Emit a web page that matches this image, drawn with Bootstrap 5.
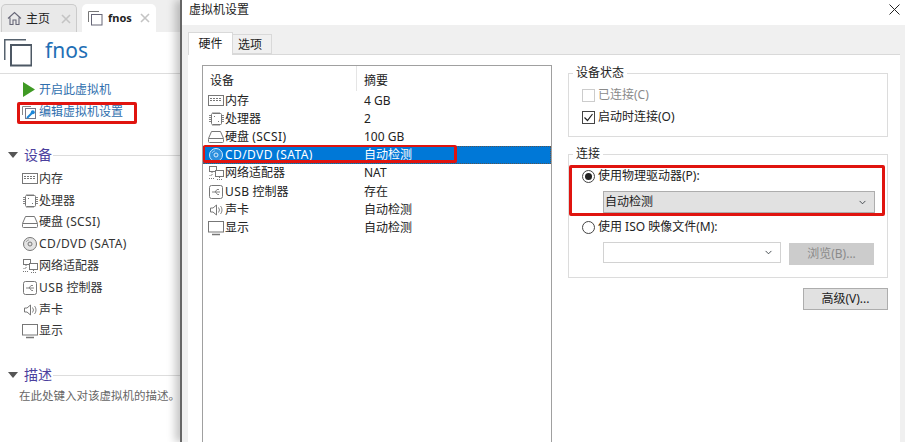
<!DOCTYPE html>
<html lang="zh-CN">
<head>
<meta charset="utf-8">
<title>虚拟机设置</title>
<link rel="stylesheet" href="https://cdn.jsdelivr.net/npm/bootstrap@5.3.0/dist/css/bootstrap.min.css">
<style>
html,body{height:442px;overflow:hidden}
body{position:relative;font:12px/16px "Noto Sans","Noto Sans CJK SC",sans-serif;color:#222;background:#fff}
.vm-page{height:442px}
.vm-side{width:180px;flex:none;overflow:hidden}
.vm-tabbar{height:32px;padding:4px 0 0 1px;background:#efefef;gap:5px}
.vm-tab{height:28px;border-radius:5px 5px 0 0;padding-left:5px;align-items:center}
.vm-tab-home{width:76px;background:#e9e9e9;border:1px solid #cbcbcb;border-bottom:0}
.vm-tab-cur{width:74px;background:#fff;font-weight:700;font-size:11px;padding-left:6px}
.vm-tab svg{flex:none}
.vm-tab span{margin-left:4px}
.vm-tab-cur span{margin-left:5px}
.vm-x{margin-left:auto;margin-right:5px}
.vm-tab-cur .vm-x{margin-right:6px}
.vm-head{height:42px;border-bottom:1px solid #ddd;padding-left:4px;align-items:center}
.vm-name{font-size:21px;line-height:28px;color:#1f6fb5;margin:-6px 0 0 13px}
.vm-actions{padding:5px 0 0 22px}
.vm-act{height:22px;align-items:center;color:#2f6fae}
.vm-act svg{flex:none;width:16px;height:16px;margin-right:1px}
.vm-sec{height:20px;align-items:center;padding-left:8px;color:#4b3f9e;font-size:14px}
.vm-sec::after{content:"";flex:1;border-top:1px solid #ddd;margin-left:1px}
.vm-arrow{width:0;height:0;border:5px solid transparent;border-top:6px solid #555;border-bottom:0;margin-right:6px}
.vm-sec-dev{margin-top:22px}
.vm-devs{padding:3px 0 0 21px}
.vm-dev{height:21.8px;align-items:center;color:#333}
.vm-dev svg{flex:none;width:18px;height:16px;color:#777}
.vm-sec-desc{margin-top:23px}
.vm-desc{margin:2px 0 0 19px;height:18px;line-height:18px;font-size:11.5px;color:#666;white-space:nowrap}
.vm-wide{letter-spacing:.4px}
.vm-dialog{flex:1;min-width:0;border-left:2px solid #666;background:#f0f0f0;box-shadow:-5px 0 8px rgba(0,0,0,.22)}
.vm-title{height:25px;background:#fff;padding:0 5px 6px 7px;align-items:center;justify-content:space-between}
.vm-tabs{height:29px;padding:7px 0 0 6px;align-items:flex-end}
.vm-dtab{border:1px solid #d9d9d9;background:#f0f0f0;height:20px;width:39px;line-height:20px;text-align:center;border-left:0;padding-right:4px}
.vm-dtab-on{height:23px;width:45px;background:#fff;border:1px solid #d9d9d9;border-bottom:0;line-height:22px;margin-bottom:-1px;position:relative;text-align:center}
.vm-panel{height:388px;margin:0 5px 0 6px;background:#fff;border-top:1px solid #d9d9d9;padding:10px 0 0 14px;gap:16px;overflow:hidden}
.vm-list{width:350px;height:377px;flex:none;border:1px solid #a0a0a0;border-bottom:0}
.vm-lhead{height:25.6px;padding-left:5px;align-items:center}
.vm-lhead span:first-child{width:149px;border-right:1px solid #e5e5e5;height:25px;line-height:29px;padding-left:2px;flex:none}
.vm-lhead span:last-child{padding:4px 0 0 7px}
.vm-row{height:18.2px;align-items:center;padding-left:4px}
.vm-row svg{flex:none;width:18px;height:16px;color:#777}
.vm-c1{width:139px;flex:none}
.vm-row-on{background:#0078d7;color:#fff;outline:1px dotted #555;outline-offset:-1px}
.vm-row-on svg{color:#d5e9fb}
.vm-right{width:320px;flex:none}
.vm-fs{border:1px solid #dcdcdc;padding:0 13px;margin:0}
.vm-fs legend{float:none;width:auto;font-size:12px;line-height:16px;padding:0 3px;margin:0 0 0 -9px}
.vm-fs-a{height:72px}
.vm-fs-b{height:132px;margin-top:9px}
.vm-opt{height:22px;align-items:center;margin-top:3px}
.vm-opt + .vm-opt{margin-top:0}
.vm-opt svg{flex:none;margin-right:3px}
.vm-dim{color:#8a8a8a}
.vm-ind{padding-left:21px;margin-top:4px}
.vm-sel.form-select{font-size:12px;line-height:16px;border-radius:0;padding:0 0 0 1px;color:#222;border:1px solid #adadad;background-color:#e1e1e1;background-size:11px 7px;background-position:right 6px center;height:22px;width:272px;box-shadow:none}
.vm-sel-off.form-select{width:178px;height:21px;background-color:#fff;border-color:#d2d2d2}
.vm-btn.btn{font-size:12px;line-height:16px;border-radius:0;padding:0;width:85px;height:22px;color:#222;background:#e1e1e1;border:1px solid #adadad}
.vm-btn-off.btn{margin:1px 0 0 8px;opacity:1;color:#8a8a8a;background:#ccc;border-color:#ccc}
.vm-adv{justify-content:flex-end;margin-top:10px}
.vm-red{position:absolute;border:3px solid #e0140f;border-radius:2px;pointer-events:none}
.vm-red-1{left:17px;top:102px;width:120px;height:22px}
.vm-red-2{left:203px;top:145px;width:254px;height:18px;border-width:2px 3px 3px 2px}
.vm-red-3{left:569px;top:165px;width:316px;height:51px}
</style>
</head>
<body>
<svg class="d-none" aria-hidden="true">
<symbol id="i-mem" viewBox="0 0 18 16"><g fill="none" stroke="currentColor"><rect x="1.500" y="2.500" width="15" height="10"/><path d="M3 5.500h12M3 7.500h12" stroke-dasharray="2 1"/></g></symbol>
<symbol id="i-cpu" viewBox="0 0 18 16"><g fill="none" stroke="currentColor"><rect x="4.500" y="2.500" width="10" height="11" rx="1"/><path d="M2 4.500h2M2 6.500h2M2 8.500h2M2 10.500h2M15 4.500h2M15 6.500h2M15 8.500h2M15 10.500h2M6 1v1M8 1v1M10 1v1M12 1v1M6 14v1M8 14v1M10 14v1M12 14v1" stroke-width=".9"/></g><path d="M7 5h1v1H7zM11 10h1v1h-1z" fill="currentColor"/></symbol>
<symbol id="i-hdd" viewBox="0 0 18 16"><g fill="none" stroke="currentColor"><path d="M4.500 2.500h9l3 7h-15z"/><rect x="1.500" y="9.500" width="15" height="4" rx="1"/></g></symbol>
<symbol id="i-cd" viewBox="0 0 18 16"><circle cx="9" cy="8" r="6.500" fill="currentColor" opacity=".2"/><g fill="none" stroke="currentColor"><circle cx="9" cy="8" r="6.500"/><circle cx="9" cy="8" r="2"/><path d="M5 6a4.500 4.500 0 0 1 3-2.200" opacity=".6"/></g></symbol>
<symbol id="i-net" viewBox="0 0 18 16"><g fill="none" stroke="currentColor"><rect x="2.500" y="1.500" width="7" height="5"/><rect x="8.500" y="5.500" width="8" height="6" fill="#fff"/><path d="M12.500 12v2M10 14.500h5M5 7v3.500H2M2 13.500h5" stroke-dasharray="1 1"/></g></symbol>
<symbol id="i-usb" viewBox="0 0 18 16"><g fill="none" stroke="currentColor"><rect x="2.500" y="1.500" width="13" height="13" rx="2"/><path d="M5 8h8M8 8l2-2.500h2M8.500 8l2 2.500h1.500" stroke-width=".9"/></g></symbol>
<symbol id="i-snd" viewBox="0 0 18 16"><g fill="none" stroke="currentColor"><path d="M3.500 6v4h2.500l3.500 3V3L6 6z"/><path d="M11.500 5.500a4 4 0 0 1 0 5M13.500 4a6 6 0 0 1 0 8" stroke-width=".9"/></g></symbol>
<symbol id="i-dsp" viewBox="0 0 18 16"><g fill="none" stroke="currentColor"><rect x="1.500" y="1.500" width="15" height="10.500"/><path d="M5 14.500h8" stroke-width="1.500"/></g></symbol>
<symbol id="i-xx" viewBox="0 0 10 10"><path d="M1 1l8 8M9 1l-8 8" fill="none" stroke="currentColor" stroke-width="1.600"/></symbol>
</svg>

<div class="vm-page d-flex">
  <aside class="vm-side">
    <div class="vm-tabbar d-flex">
      <div class="vm-tab vm-tab-home d-flex">
        <svg width="15" height="15" viewBox="0 0 15 15"><path d="M1 7.500L7.500 1.500 14 7.500M3 6.500V13.500h3V9h3v4.500h3V6.500" fill="none" stroke="#667" stroke-width="1.100"/></svg>
        <span>主页</span>
        <svg class="vm-x" width="10" height="10" color="#c4c4c4"><use href="#i-xx"/></svg>
      </div>
      <div class="vm-tab vm-tab-cur d-flex">
        <svg width="15" height="15" viewBox="0 0 15 15"><path d="M.5 11V.5H11" fill="none" stroke="#777"/><rect x="3.500" y="3.500" width="10.500" height="10.500" fill="none" stroke="#667"/></svg>
        <span>fnos</span>
        <svg class="vm-x" width="10" height="10" color="#c4c4c4"><use href="#i-xx"/></svg>
      </div>
    </div>
    <div class="vm-head d-flex">
      <svg width="28" height="28" viewBox="0 0 28 28"><path d="M.75 21V.75H22" fill="none" stroke="#56626e" stroke-width="1.500"/><rect x="7" y="6" width="20.500" height="20.500" fill="none" stroke="#4d5864" stroke-width="2"/></svg>
      <div class="vm-name">fnos</div>
    </div>
    <div class="vm-actions">
      <div class="vm-act d-flex"><svg viewBox="0 0 16 16"><path d="M1 0l12 7.500L1 15z" fill="#3f9a24"/></svg><span>开启此虚拟机</span></div>
      <div class="vm-act d-flex"><svg viewBox="0 0 16 16"><path d="M.5 11V2.500H9" fill="none" stroke="#888"/><rect x="3.500" y="4.500" width="10" height="10" fill="#fff" stroke="#778"/><path d="M5 14l5-5" stroke="#1c86d8" stroke-width="2"/><circle cx="10.800" cy="8.200" r="2" fill="#1c86d8"/></svg><span>编辑虚拟机设置</span></div>
    </div>
    <div class="vm-sec vm-sec-dev d-flex"><i class="vm-arrow"></i><span>设备</span></div>
    <div class="vm-devs">
      <div class="vm-dev d-flex"><svg><use href="#i-mem"/></svg><span>内存</span></div>
      <div class="vm-dev d-flex"><svg><use href="#i-cpu"/></svg><span>处理器</span></div>
      <div class="vm-dev d-flex"><svg><use href="#i-hdd"/></svg><span>硬盘 <span class="vm-wide">(SCSI)</span></span></div>
      <div class="vm-dev d-flex"><svg><use href="#i-cd"/></svg><span class="vm-wide">CD/DVD (SATA)</span></div>
      <div class="vm-dev d-flex"><svg><use href="#i-net"/></svg><span>网络适配器</span></div>
      <div class="vm-dev d-flex"><svg><use href="#i-usb"/></svg><span><span class="vm-wide">USB</span> 控制器</span></div>
      <div class="vm-dev d-flex"><svg><use href="#i-snd"/></svg><span>声卡</span></div>
      <div class="vm-dev d-flex"><svg><use href="#i-dsp"/></svg><span>显示</span></div>
    </div>
    <div class="vm-sec vm-sec-desc d-flex"><i class="vm-arrow"></i><span>描述</span></div>
    <div class="vm-desc">在此处键入对该虚拟机的描述。</div>
  </aside>

  <main class="vm-dialog">
    <div class="vm-title d-flex">
      <span>虚拟机设置</span>
      <svg width="11" height="11" viewBox="0 0 11 11"><path d="M.5.500l10 10M10.500.500l-10 10" stroke="#222" fill="none"/></svg>
    </div>
    <div class="vm-tabs d-flex">
      <div class="vm-dtab-on">硬件</div>
      <div class="vm-dtab">选项</div>
    </div>
    <div class="vm-panel d-flex">
      <div class="vm-list">
        <div class="vm-lhead d-flex"><span>设备</span><span>摘要</span></div>
        <div class="vm-row d-flex"><svg><use href="#i-mem"/></svg><span class="vm-c1">内存</span><span>4 GB</span></div>
        <div class="vm-row d-flex"><svg><use href="#i-cpu"/></svg><span class="vm-c1">处理器</span><span>2</span></div>
        <div class="vm-row d-flex"><svg><use href="#i-hdd"/></svg><span class="vm-c1">硬盘 <span class="vm-wide">(SCSI)</span></span><span>100 GB</span></div>
        <div class="vm-row vm-row-on d-flex"><svg><use href="#i-cd"/></svg><span class="vm-c1 vm-wide">CD/DVD (SATA)</span><span>自动检测</span></div>
        <div class="vm-row d-flex"><svg><use href="#i-net"/></svg><span class="vm-c1">网络适配器</span><span>NAT</span></div>
        <div class="vm-row d-flex"><svg><use href="#i-usb"/></svg><span class="vm-c1"><span class="vm-wide">USB</span> 控制器</span><span>存在</span></div>
        <div class="vm-row d-flex"><svg><use href="#i-snd"/></svg><span class="vm-c1">声卡</span><span>自动检测</span></div>
        <div class="vm-row d-flex"><svg><use href="#i-dsp"/></svg><span class="vm-c1">显示</span><span>自动检测</span></div>
      </div>
      <div class="vm-right">
        <fieldset class="vm-fs vm-fs-a">
          <legend>设备状态</legend>
          <div class="vm-opt vm-dim d-flex"><svg width="13" height="13"><rect x=".5" y=".5" width="12" height="12" fill="#fff" stroke="#ccc"/></svg><span>已连接(C)</span></div>
          <div class="vm-opt d-flex"><svg width="13" height="13"><rect x=".5" y=".5" width="12" height="12" fill="#fff" stroke="#444"/><path d="M2.500 6.500l3 3 5-6.500" fill="none" stroke="#222" stroke-width="1.200"/></svg><span>启动时连接(O)</span></div>
        </fieldset>
        <fieldset class="vm-fs vm-fs-b">
          <legend>连接</legend>
          <div class="vm-opt d-flex"><svg width="13" height="13"><circle cx="6.500" cy="6.500" r="6" fill="#fff" stroke="#444"/><circle cx="6.500" cy="6.500" r="3.500" fill="#222"/></svg><span>使用物理驱动器(P):</span></div>
          <div class="vm-ind"><select class="form-select vm-sel"><option>自动检测</option></select></div>
          <div class="vm-opt d-flex"><svg width="13" height="13"><circle cx="6.500" cy="6.500" r="6" fill="#fff" stroke="#444"/></svg><span>使用 ISO 映像文件(M):</span></div>
          <div class="vm-ind d-flex"><select class="form-select vm-sel vm-sel-off" disabled><option></option></select><button class="btn vm-btn vm-btn-off" disabled>浏览(B)...</button></div>
        </fieldset>
        <div class="vm-adv d-flex"><button class="btn vm-btn">高级(V)...</button></div>
      </div>
    </div>
  </main>
</div>
<div class="vm-red vm-red-1"></div>
<div class="vm-red vm-red-2"></div>
<div class="vm-red vm-red-3"></div>
<script src="https://cdn.jsdelivr.net/npm/bootstrap@5.3.0/dist/js/bootstrap.bundle.min.js"></script>
</body>
</html>
